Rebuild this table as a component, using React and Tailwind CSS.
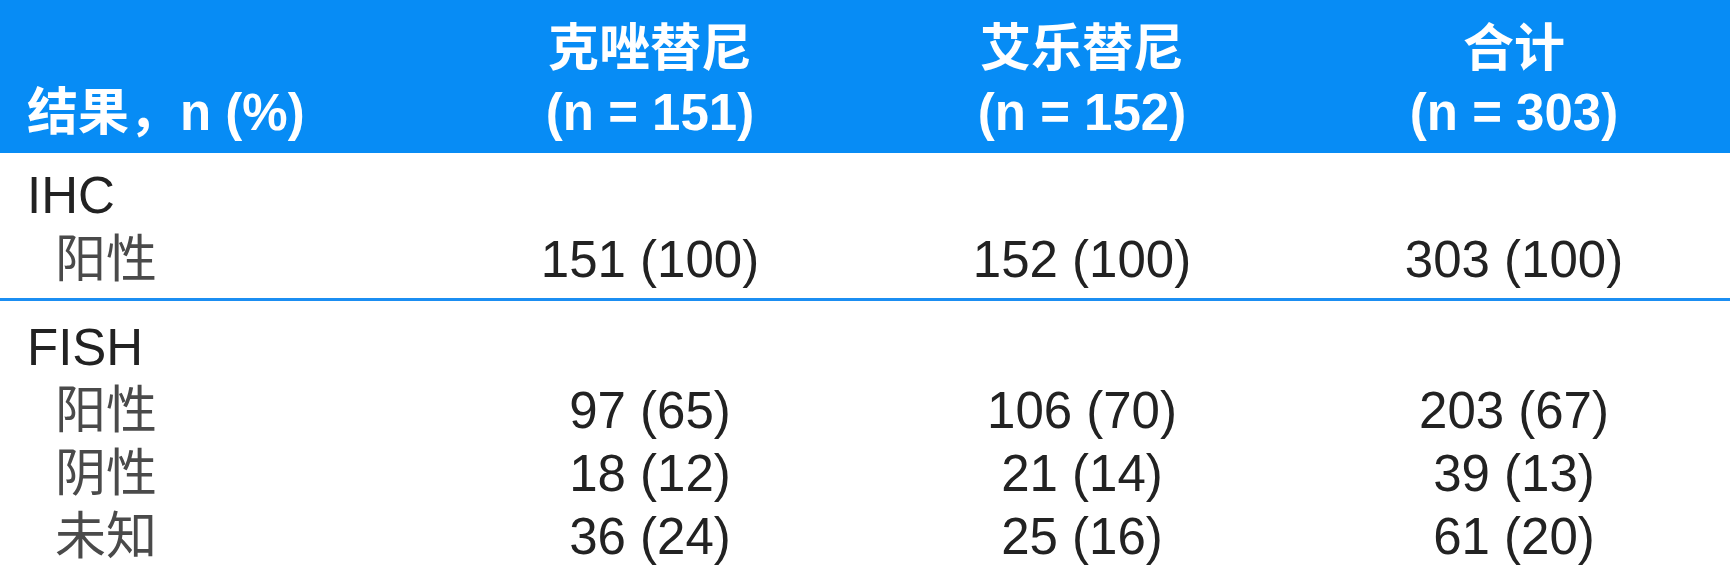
import React from 'react';

const columns = [
  { name: '克唑替尼', n: 151 },
  { name: '艾乐替尼', n: 152 },
  { name: '合计', n: 303 },
];

const sections = [
  {
    title: 'IHC',
    rows: [['阳性', '151 (100)', '152 (100)', '303 (100)']],
  },
  {
    title: 'FISH',
    rows: [
      ['阳性', '97 (65)', '106 (70)', '203 (67)'],
      ['阴性', '18 (12)', '21 (14)', '39 (13)'],
      ['未知', '36 (24)', '25 (16)', '61 (20)'],
    ],
  },
];

const Section = ({ title, rows, className }) => (
  <div className={`grid grid-cols-[434px_432px_432px_432px] ${className}`}>
    <div className="col-span-4 pl-[27px]">{title}</div>
    {rows.map(([label, ...values]) => (
      <React.Fragment key={label}>
        <div className="pl-[55px] text-[#4a4a4a]">{label}</div>
        {values.map((v, i) => (
          <div key={i} className="text-center">{v}</div>
        ))}
      </React.Fragment>
    ))}
  </div>
);

export default function App() {
  return (
    <div className="w-[1730px] h-[576px] overflow-hidden bg-white font-['Liberation_Sans','Noto_Sans_CJK_SC',sans-serif] text-[51px] leading-[64px] text-[#222]">
      <div className="h-[153px] bg-[#078cf5] grid grid-cols-[434px_432px_432px_432px] items-end pb-[8px] text-white font-bold">
        <div className="pl-[27px]">结果，n (%)</div>
        {columns.map(col => (
          <div key={col.name} className="text-center">
            <div>{col.name}</div>
            <div>(n = {col.n})</div>
          </div>
        ))}
      </div>

      <Section
        title={sections[0].title}
        rows={sections[0].rows}
        className="pt-[11px] pb-[6px] border-b-[3px] border-[#1b8ef2]"
      />
      <Section
        title={sections[1].title}
        rows={sections[1].rows}
        className="pt-[15px] leading-[63px]"
      />
    </div>
  );
}
